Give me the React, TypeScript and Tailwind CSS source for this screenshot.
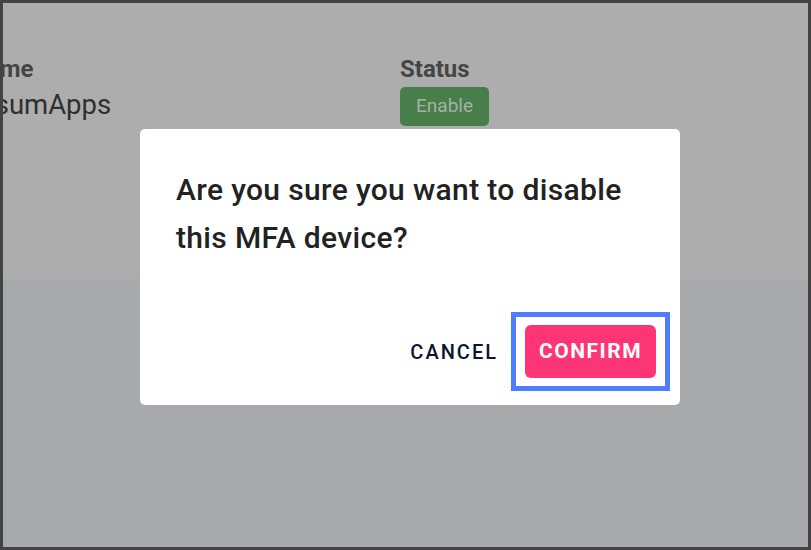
import React from 'react';

export default function App() {
    return (
        <div className="relative w-[811px] h-[550px] border-[3px] border-[#434343] flex flex-col overflow-hidden font-['Roboto',sans-serif]">
            {/* page underneath, dimmed by the backdrop */}
            <div className="h-[276px] bg-[#adadad]">
                <div className="flex pt-[52px]">
                    <div className="w-[430px] -ml-[33px] shrink-0">
                        <p className="text-[24px] font-bold text-[#454545] leading-[28px]">Name</p>
                        <p className="text-[27.5px] text-[#2f2f2f] leading-[30px] mt-[7px] -ml-[15px]">MosumApps</p>
                    </div>
                    <div>
                        <p className="text-[24px] font-bold text-[#454545] leading-[28px]">Status</p>
                        <div className="mt-[4px] w-[89px] h-[39px] rounded-[5px] bg-[#477e4a] flex items-center justify-center text-[19px] text-[#a3b3a4]">
                            Enable
                        </div>
                    </div>
                </div>
            </div>
            <div className="flex-1 bg-[#a8a9ad]" />

            {/* dialog */}
            <div className="absolute left-[137px] top-[126px] w-[540px] h-[276px] bg-white rounded-[5px] flex flex-col">
                <p className="px-[36px] pt-[37px] text-[30px] font-medium tracking-[0.35px] text-[#222] leading-[48px]">
                    Are you sure you want to disable this MFA device?
                </p>
                <div className="mt-auto mb-[14px] mr-[10px] flex items-center justify-end gap-[13px]">
                    <button className="text-[20px] font-medium tracking-[2px] text-[#0d1431]">CANCEL</button>
                    <div className="border-[5px] border-[#4f7dff] px-[9px] py-[8px]">
                        <button className="w-[131px] h-[53px] rounded-[6px] bg-[#fd3576] text-white text-[21px] font-bold tracking-[1.5px]">
                            CONFIRM
                        </button>
                    </div>
                </div>
            </div>
        </div>
    );
}
